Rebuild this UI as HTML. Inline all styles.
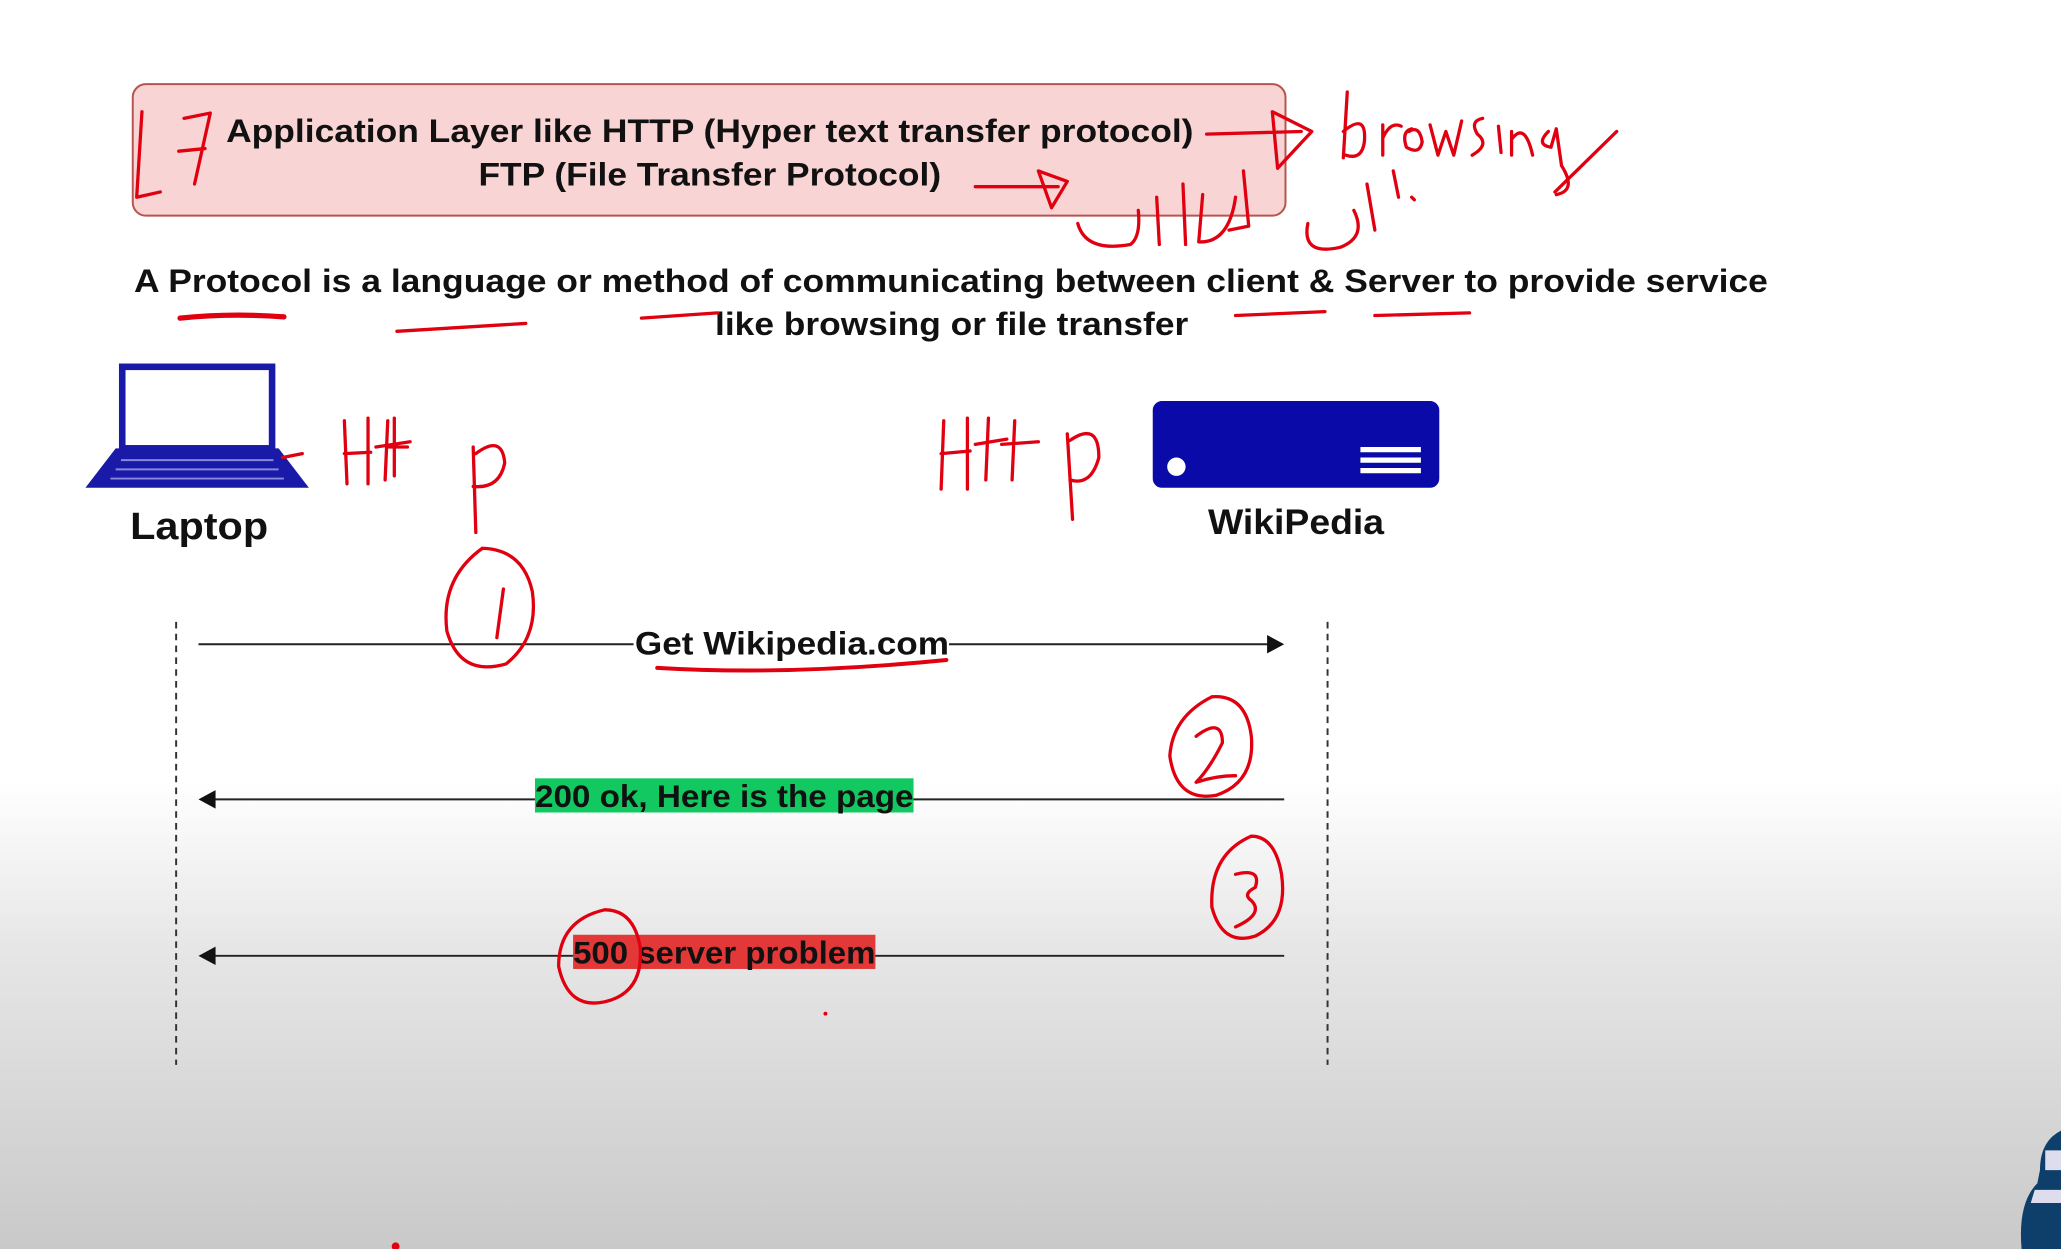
<!DOCTYPE html>
<html><head><meta charset="utf-8"><style>
html,body{margin:0;padding:0;width:2061px;height:1249px;overflow:hidden}
body{background:linear-gradient(#fff 0,#fff 780px,#e6e6e6 950px,#c9c9c9 1249px)}
svg{position:absolute;left:0;top:0}
text{font-family:"Liberation Sans",Arial,sans-serif;font-weight:bold;fill:#111}
</style></head><body>
<svg width="2061" height="1249" viewBox="0 0 1568 950" preserveAspectRatio="none">
<rect x="101" y="64" width="877" height="100" rx="10" fill="#f8d5d4" stroke="#b85450" stroke-width="1.5"/>
<text x="172" y="108" font-size="25" textLength="736" lengthAdjust="spacingAndGlyphs">Application Layer like HTTP (Hyper text transfer protocol)</text>
<text x="364" y="141" font-size="25" textLength="352" lengthAdjust="spacingAndGlyphs">FTP (File Transfer Protocol)</text>
<text x="102" y="222" font-size="25" textLength="1243" lengthAdjust="spacingAndGlyphs">A Protocol is a language or method of communicating between client &amp; Server to provide service</text>
<text x="544" y="255" font-size="25" textLength="360" lengthAdjust="spacingAndGlyphs">like browsing or file transfer</text>
<!-- laptop -->
<rect x="93" y="279" width="114" height="62" fill="#fff" stroke="#1a1aa8" stroke-width="5"/>
<path d="M88 341 H212 L235 371 H65 Z" fill="#1a1aa8"/>
<path d="M92 350H208M88 357H212M84 364H216" stroke="#8888dd" stroke-width="1.5"/>
<text x="99" y="410" font-size="29" textLength="105" lengthAdjust="spacingAndGlyphs">Laptop</text>
<!-- server -->
<rect x="877" y="305" width="218" height="66" rx="7" fill="#0a0aa8"/>
<circle cx="895" cy="355" r="7" fill="#fff"/>
<path d="M1035 342H1081M1035 350H1081M1035 358H1081" stroke="#fff" stroke-width="4"/>
<text x="919" y="406" font-size="27" textLength="134" lengthAdjust="spacingAndGlyphs">WikiPedia</text>
<!-- lifelines -->
<path d="M134 473V810M1010 473V810" stroke="#333" stroke-width="1.5" stroke-dasharray="5 4"/>
<path d="M151 490H970M158 608H977M158 727H977" stroke="#222" stroke-width="1.5"/>
<path d="M977 490L964 483V497Z M151 608L164 601V615Z M151 727L164 720V734Z" fill="#111"/>
<rect x="482" y="478" width="240" height="26" fill="#fff"/>
<text x="483" y="498" font-size="25" textLength="239" lengthAdjust="spacingAndGlyphs">Get Wikipedia.com</text>
<rect x="407" y="592" width="288" height="26" fill="#12c860"/>
<text x="407" y="614" font-size="24" textLength="288" lengthAdjust="spacingAndGlyphs">200 ok, Here is the page</text>
<rect x="436" y="711" width="230" height="26" fill="#e33838"/>
<text x="436" y="733" font-size="24" textLength="230" lengthAdjust="spacingAndGlyphs">500 server problem</text>
<!-- red handwriting -->
<g fill="none" stroke="#e00010" stroke-width="2.5" stroke-linecap="round" stroke-linejoin="round">
<path d="M108 85 L104 150 L122 146 M140 90 L160 86 L148 140 M136 115 L156 113"/>
<path d="M918 102 L990 100 M968 85 L998 100 L972 128 Z"/>
<path d="M1025 70 L1022 120 M1022 100 Q1040 85 1038 108 Q1036 122 1024 118 M1052 95 L1052 118 M1052 105 Q1058 92 1066 96 M1072 100 Q1080 95 1082 108 Q1080 118 1070 112 Q1066 100 1074 98 M1088 95 L1094 118 L1100 100 L1106 118 L1112 92 M1128 90 Q1118 92 1124 102 Q1134 110 1120 118 M1140 96 L1142 116 M1150 100 L1150 118 M1150 106 Q1160 92 1166 118 M1178 100 Q1168 110 1180 112 L1184 98 L1188 126 Q1200 145 1184 148"/>
<path d="M742 142 L805 142 M790 130 L812 138 L800 158 Z"/>
<path d="M820 170 Q826 192 860 186 Q868 180 866 160 M880 150 L882 186 M900 140 L902 186 M915 148 L912 184 Q935 185 940 150 M935 175 L950 172 L946 130 M995 170 Q990 195 1020 188 Q1040 180 1030 160 M1040 140 L1046 175 M1060 130 L1064 150 M1074 150 L1076 152"/>
<path d="M137 242 Q175 238 216 241" stroke-width="4"/>
<path d="M302 252 L400 246 M488 242 L546 238 M940 240 L1008 237 M1046 240 L1118 238"/>
<path d="M262 320 L264 368 M262 345 L282 344 M280 318 L280 368 M295 320 L293 365 M286 340 L312 336 M300 318 L300 362 M296 340 L310 340 M360 340 L362 405 M362 345 Q382 330 384 352 Q380 372 360 370"/>
<path d="M718 320 L716 372 M716 345 L738 343 M736 318 L736 372 M752 318 L750 365 M742 338 L766 334 M772 320 L770 365 M762 338 L790 336 M812 330 L816 395 M814 335 Q836 320 836 348 Q830 370 814 365"/>
<path d="M367 417 Q335 440 340 480 Q350 515 385 505 Q410 485 405 450 Q398 418 367 417 M383 448 L378 485"/>
<path d="M500 508 Q600 514 720 502" stroke-width="3"/>
<path d="M922 530 Q892 545 890 575 Q895 610 925 605 Q955 595 952 560 Q948 528 922 530 M910 560 Q930 545 930 565 Q920 585 910 595 Q925 590 940 590"/>
<path d="M952 636 Q920 650 922 690 Q930 720 955 712 Q980 700 975 665 Q970 636 952 636 M940 665 Q960 660 955 675 Q945 680 952 685 Q962 695 940 705"/>
<path d="M460 692 Q425 700 425 735 Q432 768 460 762 Q490 755 487 720 Q482 692 460 692"/>
<path d="M215 348 L230 345 M1183 146 L1230 100"/>
</g>
<circle cx="628" cy="771" r="1.5" fill="#e00010"/>
<circle cx="301" cy="948" r="3" fill="#e00010"/>
<!-- corner logo -->
<path d="M1568 860 Q1552 868 1552 890 L1550 900 Q1535 915 1538 950 H1568 Z" fill="#0e3f6a"/>
<path d="M1556 875 H1568 V890 H1556 Z M1548 905 H1568 V915 H1545 Z" fill="#dde"/>
</svg>
</body></html>
